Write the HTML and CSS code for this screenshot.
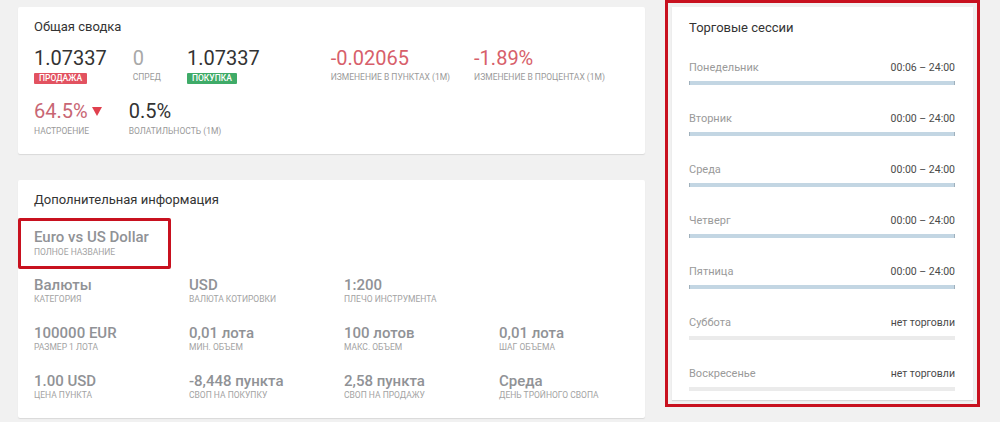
FILE: index.html
```html
<!DOCTYPE html>
<html lang="ru">
<head>
<meta charset="utf-8">
<title>EURUSD</title>
<link rel="stylesheet" href="styles.css">
</head>
<body>
<div class="page">
  <div class="left">
    <section class="card summary">
      <h2 class="card-title">Общая сводка</h2>
      <div class="stats">
        <div class="stat">
          <div class="val">1.07337</div>
          <div class="badge red">ПРОДАЖА</div>
        </div>
        <div class="stat">
          <div class="val muted">0</div>
          <div class="lbl">СПРЕД</div>
        </div>
        <div class="stat">
          <div class="val">1.07337</div>
          <div class="badge green">ПОКУПКА</div>
        </div>
        <div class="stat change">
          <div class="val neg">-0.02065</div>
          <div class="lbl">ИЗМЕНЕНИЕ В ПУНКТАХ (1М)</div>
        </div>
        <div class="stat">
          <div class="val neg">-1.89%</div>
          <div class="lbl">ИЗМЕНЕНИЕ В ПРОЦЕНТАХ (1М)</div>
        </div>
      </div>
      <div class="stats row2">
        <div class="stat">
          <div class="val neg2">64.5%<span class="tri"></span></div>
          <div class="lbl">НАСТРОЕНИЕ</div>
        </div>
        <div class="stat">
          <div class="val">0.5%</div>
          <div class="lbl">ВОЛАТИЛЬНОСТЬ (1М)</div>
        </div>
      </div>
    </section>

    <section class="card info">
      <h2 class="card-title">Дополнительная информация</h2>
      <div class="fullname">
        <div class="ival">Euro vs US Dollar</div>
        <div class="ilbl">ПОЛНОЕ НАЗВАНИЕ</div>
      </div>
      <div class="highlight-name"></div>
      <div class="grid">
        <div class="cell"><div class="ival">Валюты</div><div class="ilbl">КАТЕГОРИЯ</div></div>
        <div class="cell"><div class="ival">USD</div><div class="ilbl">ВАЛЮТА КОТИРОВКИ</div></div>
        <div class="cell"><div class="ival">1:200</div><div class="ilbl">ПЛЕЧО ИНСТРУМЕНТА</div></div>
        <div class="cell"></div>
        <div class="cell"><div class="ival">100000 EUR</div><div class="ilbl">РАЗМЕР 1 ЛОТА</div></div>
        <div class="cell"><div class="ival">0,01 лота</div><div class="ilbl">МИН. ОБЪЕМ</div></div>
        <div class="cell"><div class="ival">100 лотов</div><div class="ilbl">МАКС. ОБЪЕМ</div></div>
        <div class="cell"><div class="ival">0,01 лота</div><div class="ilbl">ШАГ ОБЪЕМА</div></div>
        <div class="cell"><div class="ival">1.00 USD</div><div class="ilbl">ЦЕНА ПУНКТА</div></div>
        <div class="cell"><div class="ival">-8,448 пункта</div><div class="ilbl">СВОП НА ПОКУПКУ</div></div>
        <div class="cell"><div class="ival">2,58 пункта</div><div class="ilbl">СВОП НА ПРОДАЖУ</div></div>
        <div class="cell"><div class="ival">Среда</div><div class="ilbl">ДЕНЬ ТРОЙНОГО СВОПА</div></div>
      </div>
    </section>
  </div>

  <section class="card sessions">
    <h2 class="card-title">Торговые сессии</h2>
    <div class="sess-list">
      <div class="sess"><div class="sess-head"><span class="day">Понедельник</span><span class="time">00:06 – 24:00</span></div><div class="bar on"></div></div>
      <div class="sess"><div class="sess-head"><span class="day">Вторник</span><span class="time">00:00 – 24:00</span></div><div class="bar on"></div></div>
      <div class="sess"><div class="sess-head"><span class="day">Среда</span><span class="time">00:00 – 24:00</span></div><div class="bar on"></div></div>
      <div class="sess"><div class="sess-head"><span class="day">Четверг</span><span class="time">00:00 – 24:00</span></div><div class="bar on"></div></div>
      <div class="sess"><div class="sess-head"><span class="day">Пятница</span><span class="time">00:00 – 24:00</span></div><div class="bar on"></div></div>
      <div class="sess"><div class="sess-head"><span class="day">Суббота</span><span class="time">нет торговли</span></div><div class="bar off"></div></div>
      <div class="sess"><div class="sess-head"><span class="day">Воскресенье</span><span class="time">нет торговли</span></div><div class="bar off"></div></div>
    </div>
  </section>
</div>
</body>
</html>
```

FILE: styles.css
```css
* { box-sizing: border-box; }
html, body {
  margin: 0;
  padding: 0;
  background: #f1f1f1;
  font-family: Roboto, "Noto Sans", "Liberation Sans", sans-serif;
  color: #333;
}
.page {
  display: flex;
  align-items: flex-start;
  gap: 27px;
  padding: 7px 0 0 18px;
  width: 1000px;
  height: 422px;
  overflow: hidden;
}
.left {
  width: 627px;
  display: flex;
  flex-direction: column;
  gap: 26px;
}
.card {
  background: #fff;
  border-radius: 2px;
  box-shadow: 0 1px 1px rgba(0,0,0,0.10);
  padding: 12px 16px 0 16px;
}
.card-title {
  margin: 0;
  font-size: 13px;
  line-height: 16px;
  font-weight: 400;
  color: #333;
}

/* summary */
.summary { height: 147px; }
.stats {
  display: flex;
  margin-top: 11px;
}
.stats.row2 { margin-top: 15px; }
.stat { margin-right: 26px; }
.stat.change { margin-left: 45px; margin-right: 24px; }
.val {
  font-size: 20px;
  line-height: 24px;
  font-weight: 400;
  color: #333;
  white-space: nowrap;
  display: flex;
  align-items: center;
}
.val.muted { color: #a8a8a8; }
.val.neg { color: #d75f6b; }
.val.neg2 { color: #c86674; }
.tri {
  display: inline-block;
  width: 0;
  height: 0;
  margin-left: 4px;
  margin-right: 1px;
  margin-top: 1px;
  border-left: 5px solid transparent;
  border-right: 5px solid transparent;
  border-top: 9px solid #e0404e;
}
.badge {
  display: block;
  width: max-content;
  margin-top: 3px;
  padding: 0 5px;
  height: 11px;
  font-size: 8.5px;
  line-height: 11px;
  font-weight: 500;
  color: #fff;
  border-radius: 1px;
}
.badge.red { background: #e25260; }
.badge.green { background: #3fab68; }
.lbl {
  margin-top: 2px;
  font-size: 8.5px;
  line-height: 11px;
  color: #9a9a9a;
  white-space: nowrap;
}
.row2 .lbl { margin-top: 3px; }

/* info */
.info {
  height: 238px;
  position: relative;
}
.fullname { margin-top: 20px; }
.ival {
  font-size: 15px;
  line-height: 18px;
  font-weight: 500;
  color: #909296;
  white-space: nowrap;
}
.ilbl {
  font-size: 8.5px;
  line-height: 11px;
  color: #a3a3a3;
  white-space: nowrap;
}
.fullname .ilbl { margin-top: 1px; }
.highlight-name {
  position: absolute;
  left: 0;
  top: 38px;
  width: 153px;
  height: 51px;
  border: 3px solid #c8111f;
  border-radius: 2px;
  pointer-events: none;
}
.grid {
  display: grid;
  grid-template-columns: 155px 155px 155px 1fr;
  row-gap: 19px;
  margin-top: 18px;
}

/* sessions */
.sessions {
  width: 301px;
  height: 393px;
  border-radius: 0;
  padding: 13px 18px 0 17px;
  outline: 3px solid #c8111f;
  outline-offset: 4px;
}
.sess-list {
  margin-top: 25px;
  display: flex;
  flex-direction: column;
  gap: 27px;
}
.sess-head {
  display: flex;
  justify-content: space-between;
  align-items: baseline;
  line-height: 13px;
}
.day {
  font-size: 11px;
  color: #9a9a9a;
}
.time {
  font-size: 10.5px;
  color: #4a4a4a;
}
.bar {
  margin-top: 7px;
  height: 4px;
}
.bar.on {
  background: #c3d6e3;
  border-left: 1px solid #9fb0bc;
  border-right: 1px solid #9fb0bc;
}
.bar.off { background: #ebebeb; }
```
